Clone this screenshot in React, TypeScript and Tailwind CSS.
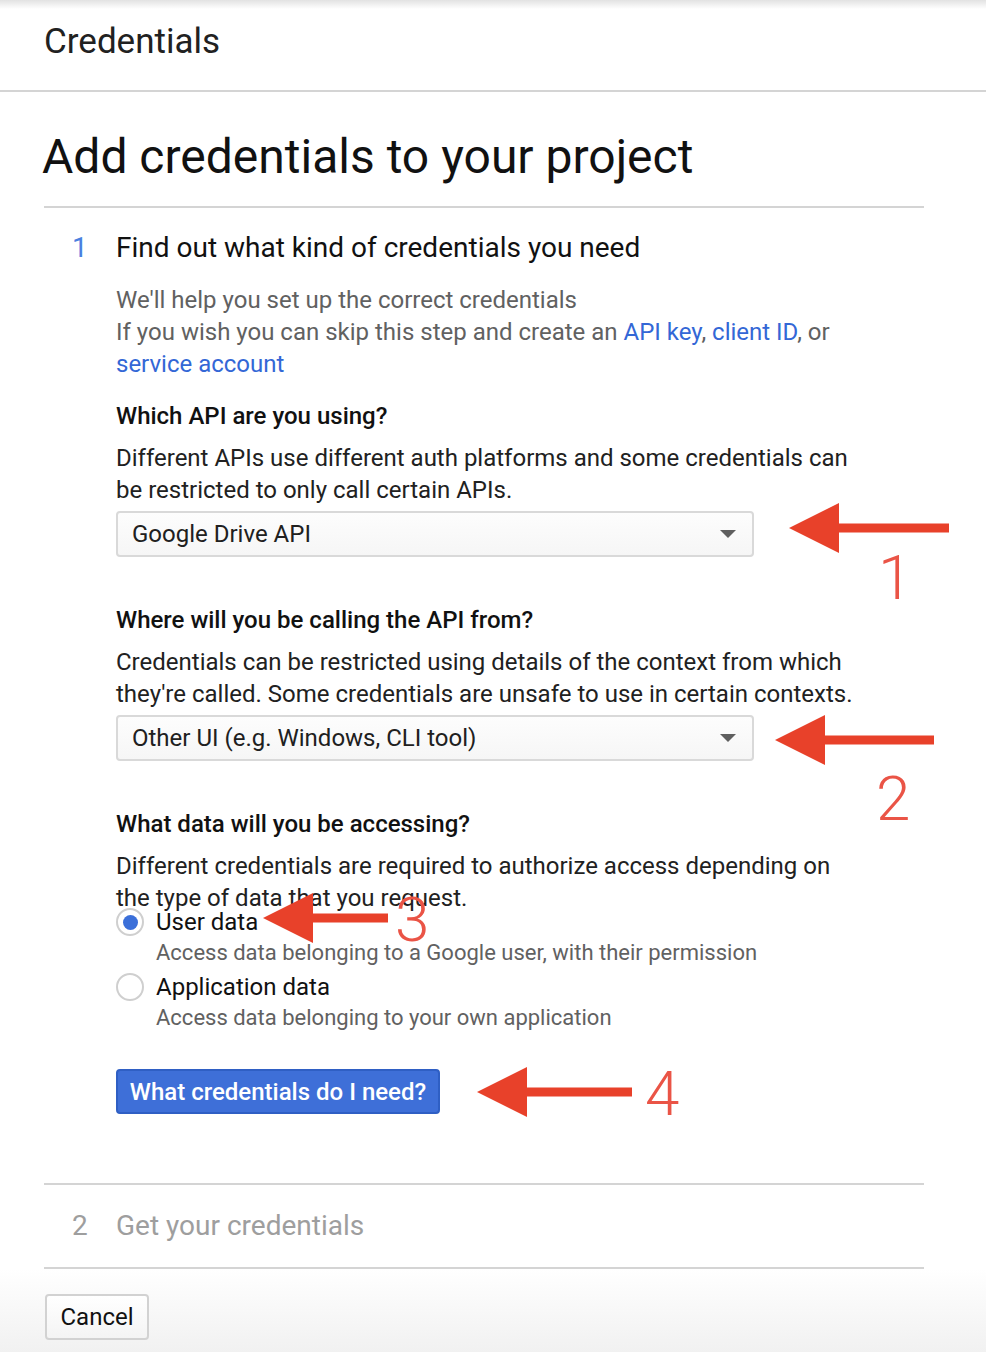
import React from "react";

function Select({ value }: { value: string }) {
  return (
    <div className="flex h-[46px] w-[638px] items-center justify-between rounded-[4px] border-2 border-[#d9d9d9] bg-[linear-gradient(to_bottom,#fdfdfd,#f6f6f6)] pl-[14px] pr-[16px]">
      <span className="text-[24px] leading-[32px] text-[#202020]">{value}</span>
      <svg width="16" height="8" viewBox="0 0 16 8">
        <polygon points="0,0 16,0 8,8" fill="#5f5f5f" />
      </svg>
    </div>
  );
}

function Radio({ checked, label, desc }: { checked: boolean; label: string; desc: string }) {
  return (
    <div className="mb-[4px] flex">
      <div className="flex h-[32px] w-[40px] items-center">
        <div className="flex h-[28px] w-[28px] items-center justify-center rounded-full border-2 border-[#cfcfcf] bg-white">
          {checked && <div className="h-[15px] w-[15px] rounded-full bg-[#3b6fd9]" />}
        </div>
      </div>
      <div>
        <div className="text-[24px] leading-[32px] text-[#111]">{label}</div>
        <div className="mt-[1px] text-[22px] leading-[28px] text-[#616161]">{desc}</div>
      </div>
    </div>
  );
}

export default function App() {
  return (
    <div className="relative min-h-[1352px] w-[986px] overflow-hidden bg-white font-['Roboto',_'Noto_Sans',_sans-serif]">
      {/* Header */}
      <div className="h-[92px] border-b-2 border-[#d4d4d4] bg-[linear-gradient(to_bottom,#e2e2e2_0px,#ffffff_9px)] pl-[44px] pt-[20px]">
        <div className="text-[35px] leading-[44px] text-[#212121]">Credentials</div>
      </div>

      <div className="ml-[44px] w-[880px]">
        {/* Title */}
        <div className="border-b-2 border-[#d4d4d4] pb-[21px] pt-[37px]">
          <h1 className="-ml-[2px] text-[48px] leading-[56px] text-[#111]">Add credentials to your project</h1>
        </div>

        {/* Step 1 */}
        <div className="border-b-2 border-[#d4d4d4] pb-[69px] pt-[22px]">
          <div className="flex items-center">
            <div className="w-[73px] pl-[28px] text-[28px] leading-[36px] text-[#4a80e0]">1</div>
            <div className="-ml-[1px] text-[28px] leading-[36px] text-[#111]">Find out what kind of credentials you need</div>
          </div>
          <div className="pl-[72px]">
            <p className="mt-[18px] text-[24px] leading-[32px] text-[#616161]">
              We'll help you set up the correct credentials
              <br />
              If you wish you can skip this step and create an{" "}
              <span className="text-[#3367d6]">API key</span>,{" "}
              <span className="text-[#3367d6]">client ID</span>, or
              <br />
              <span className="text-[#3367d6]">service account</span>
            </p>

            <h3 className="mt-[20px] text-[24px] font-medium leading-[32px] text-[#111]">Which API are you using?</h3>
            <p className="mt-[10px] text-[24px] leading-[32px] text-[#212121]">
              Different APIs use different auth platforms and some credentials can
              <br />
              be restricted to only call certain APIs.
            </p>
            <div className="mt-[5px]">
              <Select value="Google Drive API" />
            </div>

            <h3 className="mt-[47px] text-[24px] font-medium leading-[32px] text-[#111]">Where will you be calling the API from?</h3>
            <p className="mt-[10px] text-[24px] leading-[32px] text-[#212121]">
              Credentials can be restricted using details of the context from which
              <br />
              they're called. Some credentials are unsafe to use in certain contexts.
            </p>
            <div className="mt-[5px]">
              <Select value="Other UI (e.g. Windows, CLI tool)" />
            </div>

            <h3 className="mt-[47px] text-[24px] font-medium leading-[32px] text-[#111]">What data will you be accessing?</h3>
            <p className="mt-[10px] text-[24px] leading-[32px] text-[#212121]">
              Different credentials are required to authorize access depending on
              <br />
              the type of data that you request.
            </p>
            <div className="-mt-[8px]">
              <Radio checked label="User data" desc="Access data belonging to a Google user, with their permission" />
              <Radio checked={false} label="Application data" desc="Access data belonging to your own application" />
            </div>

            <button className="mt-[37px] flex h-[45px] w-[324px] items-center justify-center rounded-[4px] border-2 border-[#2f5fc4] bg-[#3e6fd8] text-[24px] font-medium text-white">
              What credentials do I need?
            </button>
          </div>
        </div>

        {/* Step 2 */}
        <div className="flex items-center border-b-2 border-[#d4d4d4] pb-[23px] pt-[23px]">
          <div className="w-[73px] pl-[28px] text-[28px] leading-[36px] text-[#9e9e9e]">2</div>
          <div className="-ml-[1px] text-[28px] leading-[36px] text-[#9e9e9e]">Get your credentials</div>
        </div>
      </div>

      {/* Footer */}
      <div className="h-[84px] bg-[linear-gradient(to_bottom,#ffffff,#f1f1f1)] pl-[45px] pt-[25px]">
        <button className="flex h-[46px] w-[104px] items-center justify-center rounded-[4px] border-2 border-[#d2d2d2] bg-[linear-gradient(to_bottom,#ffffff,#f4f4f4)] text-[24px] text-[#111]">
          Cancel
        </button>
      </div>

      {/* Annotations */}
      <svg className="absolute left-[789px] top-[502px]" width="160" height="52" viewBox="0 0 160 52">
        <polygon points="0,26 50,1 50,51" fill="#e8412a" />
        <rect x="48" y="21.5" width="112" height="9" fill="#e8412a" />
      </svg>
      <div className="absolute left-[878px] top-[543px] text-[62px] font-light leading-[70px] text-[#ea5446]">1</div>

      <svg className="absolute left-[775px] top-[714px]" width="159" height="52" viewBox="0 0 159 52">
        <polygon points="0,26 50,1 50,51" fill="#e8412a" />
        <rect x="48" y="21.5" width="111" height="9" fill="#e8412a" />
      </svg>
      <div className="absolute left-[876px] top-[764px] text-[62px] font-light leading-[70px] text-[#ea5446]">2</div>

      <svg className="absolute left-[263px] top-[892px]" width="125" height="52" viewBox="0 0 125 52">
        <polygon points="0,26 50,1 50,51" fill="#e8412a" />
        <rect x="48" y="21.5" width="77" height="9" fill="#e8412a" />
      </svg>
      <div className="absolute left-[395px] top-[885px] text-[62px] font-light leading-[70px] text-[#ea5446]">3</div>

      <svg className="absolute left-[477px] top-[1066px]" width="155" height="52" viewBox="0 0 155 52">
        <polygon points="0,26 50,1 50,51" fill="#e8412a" />
        <rect x="48" y="21.5" width="107" height="9" fill="#e8412a" />
      </svg>
      <div className="absolute left-[645px] top-[1059px] text-[62px] font-light leading-[70px] text-[#ea5446]">4</div>
    </div>
  );
}
